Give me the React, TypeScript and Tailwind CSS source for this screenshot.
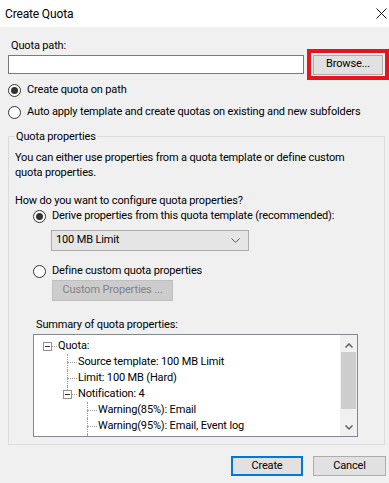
import React from 'react'

const font = { fontFamily: 'Roboto, "Liberation Sans", Arial, sans-serif' }

function Radio({ checked }: { checked?: boolean }) {
  return (
    <span className="w-[13px] h-[13px] rounded-full border border-[#333] bg-white flex items-center justify-center shrink-0">
      {checked && <span className="w-[7px] h-[7px] rounded-full bg-[#333]" />}
    </span>
  )
}

// one 20px column of the tree view: connector lines and/or the [-] box
type Cell = 'blank' | 'tee' | 'ell' | 'box' | 'boxUp'

function TreeCell({ kind }: { kind: Cell }) {
  if (kind === 'blank') return <span className="w-[20px] h-full shrink-0" />
  const up = kind === 'tee' || kind === 'ell' || kind === 'boxUp'
  const down = kind === 'tee'
  const box = kind === 'box' || kind === 'boxUp'
  return (
    <span className="w-[20px] h-full shrink-0 flex flex-col">
      <span className="h-[8px] flex">
        <span className="w-[10px]" />
        {up && <span className="border-l border-dotted border-[#a0a0a0]" />}
      </span>
      <span className="h-0 flex items-center relative">
        <span className="w-[10px]" />
        <span className="flex-1 border-t border-dotted border-[#a0a0a0]" />
        {box && (
          <span className="absolute left-[6px] top-[-4px] w-[9px] h-[9px] border border-[#919191] bg-white flex items-center justify-center">
            <span className="w-[5px] h-px bg-[#333]" />
          </span>
        )}
      </span>
      <span className="flex-1 flex">
        <span className="w-[10px]" />
        {down && <span className="border-l border-dotted border-[#a0a0a0]" />}
      </span>
    </span>
  )
}

function TreeRow({ cells, children }: { cells: Cell[]; children?: React.ReactNode }) {
  return (
    <div className="h-[16px] flex items-stretch pl-[3px]">
      {cells.map((c, i) => <TreeCell key={i} kind={c} />)}
      <span className="ml-[1px] whitespace-nowrap leading-[16px]">{children}</span>
    </div>
  )
}

export default function App() {
  return (
    <div className="w-[389px] h-[483px] bg-[#f0f0f0] text-[11px] tracking-[-0.15px] text-black overflow-hidden" style={font}>
      {/* title bar */}
      <div className="h-[27px] bg-white flex items-center justify-between pl-[5px] pr-[2px]">
        <span className="text-[12px]">Create Quota</span>
        <svg width="11" height="11" viewBox="0 0 11 11">
          <path d="M0.5 0.5 L10.5 10.5 M10.5 0.5 L0.5 10.5" stroke="#111" strokeWidth="1" />
        </svg>
      </div>

      <div className="pl-[8px] pr-[4px] pt-[11px]">
        <div className="h-[15px] leading-[15px] pl-[3px]">Quota path:</div>

        <div className="flex items-center h-[31px] mt-[-4px] mr-[-4px]">
          <div className="w-[296px] h-[19px] bg-white border border-[#7a7a7a]" />
          <div className="ml-[3px] w-[82px] h-[31px] border-[4px] border-[#e8141c] flex items-center pl-[2px]">
            <div className="w-[70px] h-[20px] bg-[#e1e1e1] border border-[#adadad] flex items-center justify-center">
              Browse...
            </div>
          </div>
        </div>

        <div className="flex items-center gap-[6px] h-[16px] mt-[2px]">
          <Radio checked />
          <span>Create quota on path</span>
        </div>
        <div className="flex items-center gap-[6px] h-[16px] mt-[6px]">
          <Radio />
          <span className="whitespace-nowrap">Auto apply template and create quotas on existing and new subfolders</span>
        </div>

        {/* group box */}
        <fieldset className="mt-[9px] border border-[#dcdcdc] pb-[7px]">
          <legend className="ml-[6px] px-[1px] leading-[15px]">Quota properties</legend>
          <div className="leading-[15px] ml-[6px] mt-[6px]">
            <div className="whitespace-nowrap">You can either use properties from a quota template or define custom</div>
            <div>quota properties.</div>
            <div className="mt-[13px]">How do you want to configure quota properties?</div>
          </div>

          <div className="flex items-center gap-[6px] h-[16px] ml-[24px]">
            <Radio checked />
            <span>Derive properties from this quota template (recommended):</span>
          </div>
          <div className="ml-[42px] mt-[6px] w-[198px] h-[21px] bg-[#e5e5e5] border border-[#acacac] flex items-center justify-between pl-[4px] pr-[8px]">
            <span>100 MB Limit</span>
            <svg width="9" height="5" viewBox="0 0 9 5">
              <path d="M0.5 0.5 L4.5 4.5 L8.5 0.5" fill="none" stroke="#555" strokeWidth="1" />
            </svg>
          </div>
          <div className="flex items-center gap-[6px] h-[16px] mt-[12px] ml-[24px]">
            <Radio />
            <span>Define custom quota properties</span>
          </div>
          <div className="ml-[43px] mt-[1px] w-[121px] h-[21px] bg-[#cccccc] border border-[#bfbfbf] flex items-center justify-center text-[#838383]">
            Custom Properties ...
          </div>

          <div className="ml-[27px] mt-[16px] leading-[15px]">Summary of quota properties:</div>
          <div className="ml-[24px] mt-[2px] w-[325px] h-[103px] bg-white border border-[#828790] flex">
            <div className="flex-1 pt-[3px] overflow-hidden">
              <TreeRow cells={['box']}>Quota:</TreeRow>
              <TreeRow cells={['blank', 'tee']}>Source template: 100 MB Limit</TreeRow>
              <TreeRow cells={['blank', 'tee']}>Limit: 100 MB (Hard)</TreeRow>
              <TreeRow cells={['blank', 'boxUp']}>Notification: 4</TreeRow>
              <TreeRow cells={['blank', 'blank', 'tee']}>Warning(85%): Email</TreeRow>
              <TreeRow cells={['blank', 'blank', 'tee']}>Warning(95%): Email, Event log</TreeRow>
              <TreeRow cells={['blank', 'blank', 'tee']} />
            </div>
            <div className="w-[17px] bg-[#f0f0f0] flex flex-col">
              <div className="h-[17px] flex items-center justify-center pt-[3px]">
                <svg width="8" height="5" viewBox="0 0 8 5">
                  <path d="M0.5 4.5 L4 1 L7.5 4.5" fill="none" stroke="#606060" strokeWidth="1.5" />
                </svg>
              </div>
              <div className="mx-auto w-[15px] h-[57px] bg-[#cdcdcd]" />
              <div className="flex-1" />
              <div className="h-[17px] flex items-center justify-center pb-[1px]">
                <svg width="8" height="5" viewBox="0 0 8 5">
                  <path d="M0.5 0.5 L4 4 L7.5 0.5" fill="none" stroke="#606060" strokeWidth="1.5" />
                </svg>
              </div>
            </div>
          </div>
        </fieldset>

        <div className="flex justify-end gap-[10px] mt-[11px] mr-[-1px]">
          <div className="w-[72px] h-[20px] bg-[#e1e1e1] border-2 border-[#0078d7] flex items-center justify-center">
            Create
          </div>
          <div className="w-[73px] h-[20px] bg-[#e1e1e1] border border-[#adadad] flex items-center justify-center">
            Cancel
          </div>
        </div>
      </div>
    </div>
  )
}
